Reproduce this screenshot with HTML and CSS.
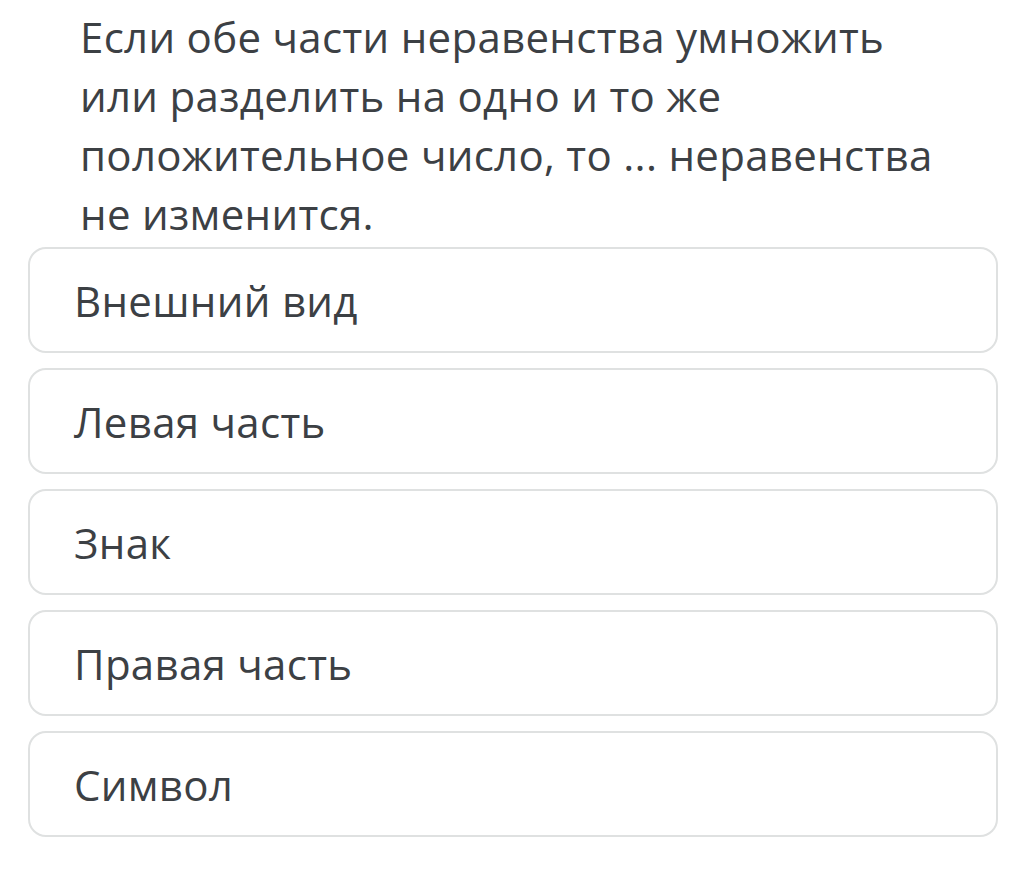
FILE: index.html
```html
<!DOCTYPE html>
<html lang="ru">
<head>
<meta charset="utf-8">
<link rel="stylesheet" href="styles.css">
</head>
<body>
<div class="quiz">
  <p class="question">Если обе части неравенства умножить или разделить на одно и то же положительное число, то ... неравенства не изменится.</p>
  <ul class="options">
    <li class="option">Внешний вид</li>
    <li class="option">Левая часть</li>
    <li class="option">Знак</li>
    <li class="option">Правая часть</li>
    <li class="option">Символ</li>
  </ul>
</div>
</body>
</html>
```
FILE: styles.css
```css
html, body {
  margin: 0;
  padding: 0;
  background: #ffffff;
}
.quiz {
  font-family: "Open Sans", "Noto Sans", sans-serif;
  color: #3c4044;
  padding: 7px 26px 0 28px;
}
.question {
  margin: 0 0 4px;
  padding-left: 52px;
  max-width: 862px;
  font-size: 42px;
  line-height: 59px;
  letter-spacing: 0.3px;
}
.options {
  list-style: none;
  margin: 0;
  padding: 0;
  display: flex;
  flex-direction: column;
  gap: 15px;
}
.option {
  box-sizing: border-box;
  height: 106px;
  border: 2.5px solid #dfe1e1;
  border-radius: 18px;
  display: flex;
  align-items: center;
  padding: 1px 0 0 44px;
  font-size: 42px;
  letter-spacing: 0.3px;
}
```
